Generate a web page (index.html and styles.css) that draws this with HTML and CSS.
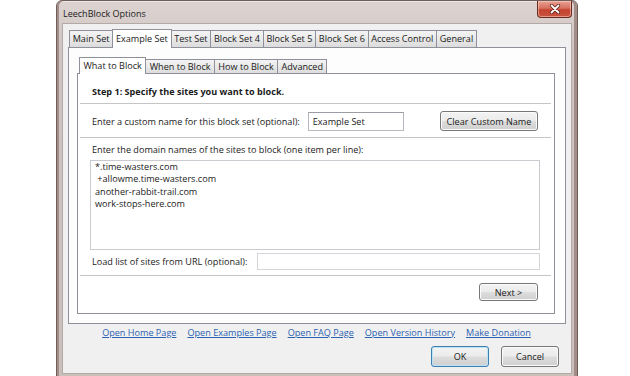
FILE: index.html
```html
<!DOCTYPE html>
<html>
<head>
<meta charset="utf-8">
<link rel="stylesheet" href="styles.css">
</head>
<body>
<div class="window">
  <div class="titlebar">
    <span class="title">LeechBlock Options</span>
    <div class="close">
      <svg width="12" height="10" viewBox="0 0 12 10"><path d="M2.5 1.5 L9.5 8.5 M9.5 1.5 L2.5 8.5" stroke="#5a1a10" stroke-width="3.2" stroke-linecap="round"/><path d="M2.5 1.5 L9.5 8.5 M9.5 1.5 L2.5 8.5" stroke="#ffffff" stroke-width="1.8" stroke-linecap="round"/></svg>
    </div>
  </div>
  <div class="client">
    <div class="tabs outer-tabs">
      <div class="tab">Main Set</div>
      <div class="tab selected">Example Set</div>
      <div class="tab">Test Set</div>
      <div class="tab">Block Set 4</div>
      <div class="tab">Block Set 5</div>
      <div class="tab">Block Set 6</div>
      <div class="tab">Access Control</div>
      <div class="tab last">General</div>
    </div>
    <div class="panel outer-panel">
      <div class="tabs inner-tabs">
        <div class="tab selected">What to Block</div>
        <div class="tab">When to Block</div>
        <div class="tab">How to Block</div>
        <div class="tab last">Advanced</div>
      </div>
      <div class="panel inner-panel">
        <div class="heading">Step 1: Specify the sites you want to block.</div>
        <div class="sep"></div>
        <div class="name-row">
          <span class="label">Enter a custom name for this block set (optional):</span>
          <div class="input name-input">Example Set</div>
          <div class="button clear-btn">Clear Custom Name</div>
        </div>
        <div class="sep flush"></div>
        <div class="label domains-label">Enter the domain names of the sites to block (one item per line):</div>
        <div class="textarea">
          <div>*.time-wasters.com</div>
          <div>&nbsp;+allowme.time-wasters.com</div>
          <div>another-rabbit-trail.com</div>
          <div>work-stops-here.com</div>
        </div>
        <div class="url-row">
          <span class="label">Load list of sites from URL (optional):</span>
          <div class="input url-input"></div>
        </div>
        <div class="sep"></div>
        <div class="next-row">
          <div class="button next-btn">Next &gt;</div>
        </div>
      </div>
    </div>
    <div class="links">
      <a>Open Home Page</a>
      <a>Open Examples Page</a>
      <a>Open FAQ Page</a>
      <a>Open Version History</a>
      <a>Make Donation</a>
    </div>
    <div class="dialog-buttons">
      <div class="button ok-btn">OK</div>
      <div class="button cancel-btn">Cancel</div>
    </div>
  </div>
</div>
</body>
</html>
```

FILE: styles.css
```css
html, body {
  margin: 0;
  padding: 0;
  background: #ffffff;
}

body {
  font-family: "Open Sans", "Noto Sans", sans-serif;
  font-size: 9.1px;
  color: #1a1a1a;
  overflow: hidden;
  height: 376px;
}

.window {
  box-sizing: border-box;
  width: 522px;
  height: 392px;
  margin-left: 56px;
  border: 1px solid #6f5e5a;
  border-radius: 6px 6px 0 0;
  background: linear-gradient(180deg, #ddd4d2 0%, #cfc4c1 12%, #cbbfbc 100%);
  box-shadow: inset 2px 0 0 #a38d88, inset -3px 0 0 #a38d88, inset 0 1px 0 #ece6e4;
  padding: 0 5px 0 5px;
}

.titlebar {
  height: 22px;
  display: flex;
  align-items: flex-start;
}

.title {
  margin-top: 6px;
  margin-left: 1px;
  font-size: 9px;
  color: #222;
}

.close {
  margin-left: auto;
  margin-right: 0;
  width: 35px;
  height: 17px;
  box-sizing: border-box;
  border: 1px solid #6b2a20;
  border-top: none;
  border-radius: 0 0 4px 4px;
  background: linear-gradient(180deg, #e8a294 0%, #d7705f 45%, #c54330 55%, #c8553f 100%);
  display: flex;
  align-items: center;
  justify-content: center;
  box-shadow: inset 0 0 0 1px rgba(255, 220, 210, 0.5);
}

.client {
  box-sizing: border-box;
  background: #f0f0f0;
  border: 1px solid #b3a9a6;
  height: 351px;
  padding: 5px 5px 0 5px;
}

.tabs {
  display: flex;
  align-items: flex-end;
  position: relative;
  z-index: 1;
}

.tab {
  box-sizing: border-box;
  border: 1px solid #8e9199;
  border-bottom: none;
  border-right: none;
  background: linear-gradient(180deg, #f4f4f4 0%, #e9e9e9 50%, #dcdcdc 100%);
  padding: 0 3px;
  white-space: nowrap;
  display: flex;
  align-items: center;
}

.tab.last {
  border-right: 1px solid #8e9199;
}

.tab.selected {
  background: #ffffff;
  border-right: 1px solid #8e9199;
  margin-right: -1px;
  position: relative;
  z-index: 2;
}

.tab.selected + .tab {
  border-left-color: transparent;
}

.outer-tabs {
  margin-left: 1px;
}

.outer-tabs .tab {
  height: 17px;
  padding: 0 2.7px 1px;
}

.outer-tabs .tab.selected {
  height: 19px;
  margin-bottom: -1px;
  padding-bottom: 2px;
}

.inner-tabs {
  margin-left: 2px;
}

.inner-tabs .tab {
  height: 14px;
  padding: 0 3.4px;
}

.inner-tabs .tab.selected {
  height: 17px;
  margin-bottom: -1px;
  padding-bottom: 2px;
}

.panel {
  box-sizing: border-box;
  border: 1px solid #8e9199;
}

.outer-panel {
  background: #fdfdfd;
  padding: 9px 10px 9px 8px;
}

.inner-panel {
  background: #ffffff;
  padding: 0 14px 12px 12px;
}

.heading {
  font-weight: bold;
  padding: 11px 0 0 2px;
  line-height: 13px;
}

.sep {
  height: 0;
  border-top: 1px solid #c5c5c5;
  margin: 5px -11px 0 -10px;
}

.sep.flush {
  margin-top: 0;
}

.label {
  white-space: nowrap;
}

.name-row {
  display: flex;
  align-items: center;
  padding: 7px 0 6px 2px;
}

.input {
  box-sizing: border-box;
  background: #ffffff;
  border: 1px solid #b5b8bf;
  border-top-color: #9a9da4;
}

.name-input {
  width: 96px;
  height: 19px;
  margin-left: 8px;
  padding: 2px 4px;
  line-height: 13px;
}

.button {
  box-sizing: border-box;
  border: 1px solid #777;
  border-radius: 3px;
  background: linear-gradient(180deg, #f3f3f3 0%, #ebebeb 48%, #dddddd 52%, #cfcfcf 100%);
  box-shadow: inset 0 0 0 1px #fbfbfb;
  display: flex;
  align-items: center;
  justify-content: center;
  white-space: nowrap;
}

.clear-btn {
  margin-left: auto;
  margin-right: 2px;
  width: 98px;
  height: 20px;
}

.domains-label {
  padding-left: 2px;
  margin-top: 5px;
  line-height: 13px;
}

.textarea {
  box-sizing: border-box;
  margin-top: 4px;
  height: 90px;
  border: 1px solid #c9cbd0;
  background: #fff;
  padding: 0 0 0 4px;
  line-height: 12.4px;
}

.url-row {
  display: flex;
  align-items: center;
  margin-top: 3px;
  padding-left: 2px;
}

.url-input {
  margin-left: auto;
  width: 283px;
  height: 17px;
  border-color: #d4d6da;
}

.next-row {
  display: flex;
  justify-content: flex-end;
  margin-top: 7px;
}

.next-btn {
  width: 59px;
  height: 18px;
  margin-right: 2px;
}

.links {
  display: flex;
  justify-content: center;
  gap: 11px;
  margin-top: 3px;
  line-height: 12px;
  padding-right: 1px;
}

.links a {
  color: #2c62b0;
  text-decoration: underline;
  cursor: pointer;
}

.dialog-buttons {
  display: flex;
  justify-content: flex-end;
  gap: 12px;
  margin-top: 7px;
  padding-right: 7px;
}

.ok-btn, .cancel-btn {
  width: 58px;
  height: 21px;
}

.ok-btn {
  border-color: #3c7fb1;
  box-shadow: inset 0 0 0 1px #bde3f7;
}
```
